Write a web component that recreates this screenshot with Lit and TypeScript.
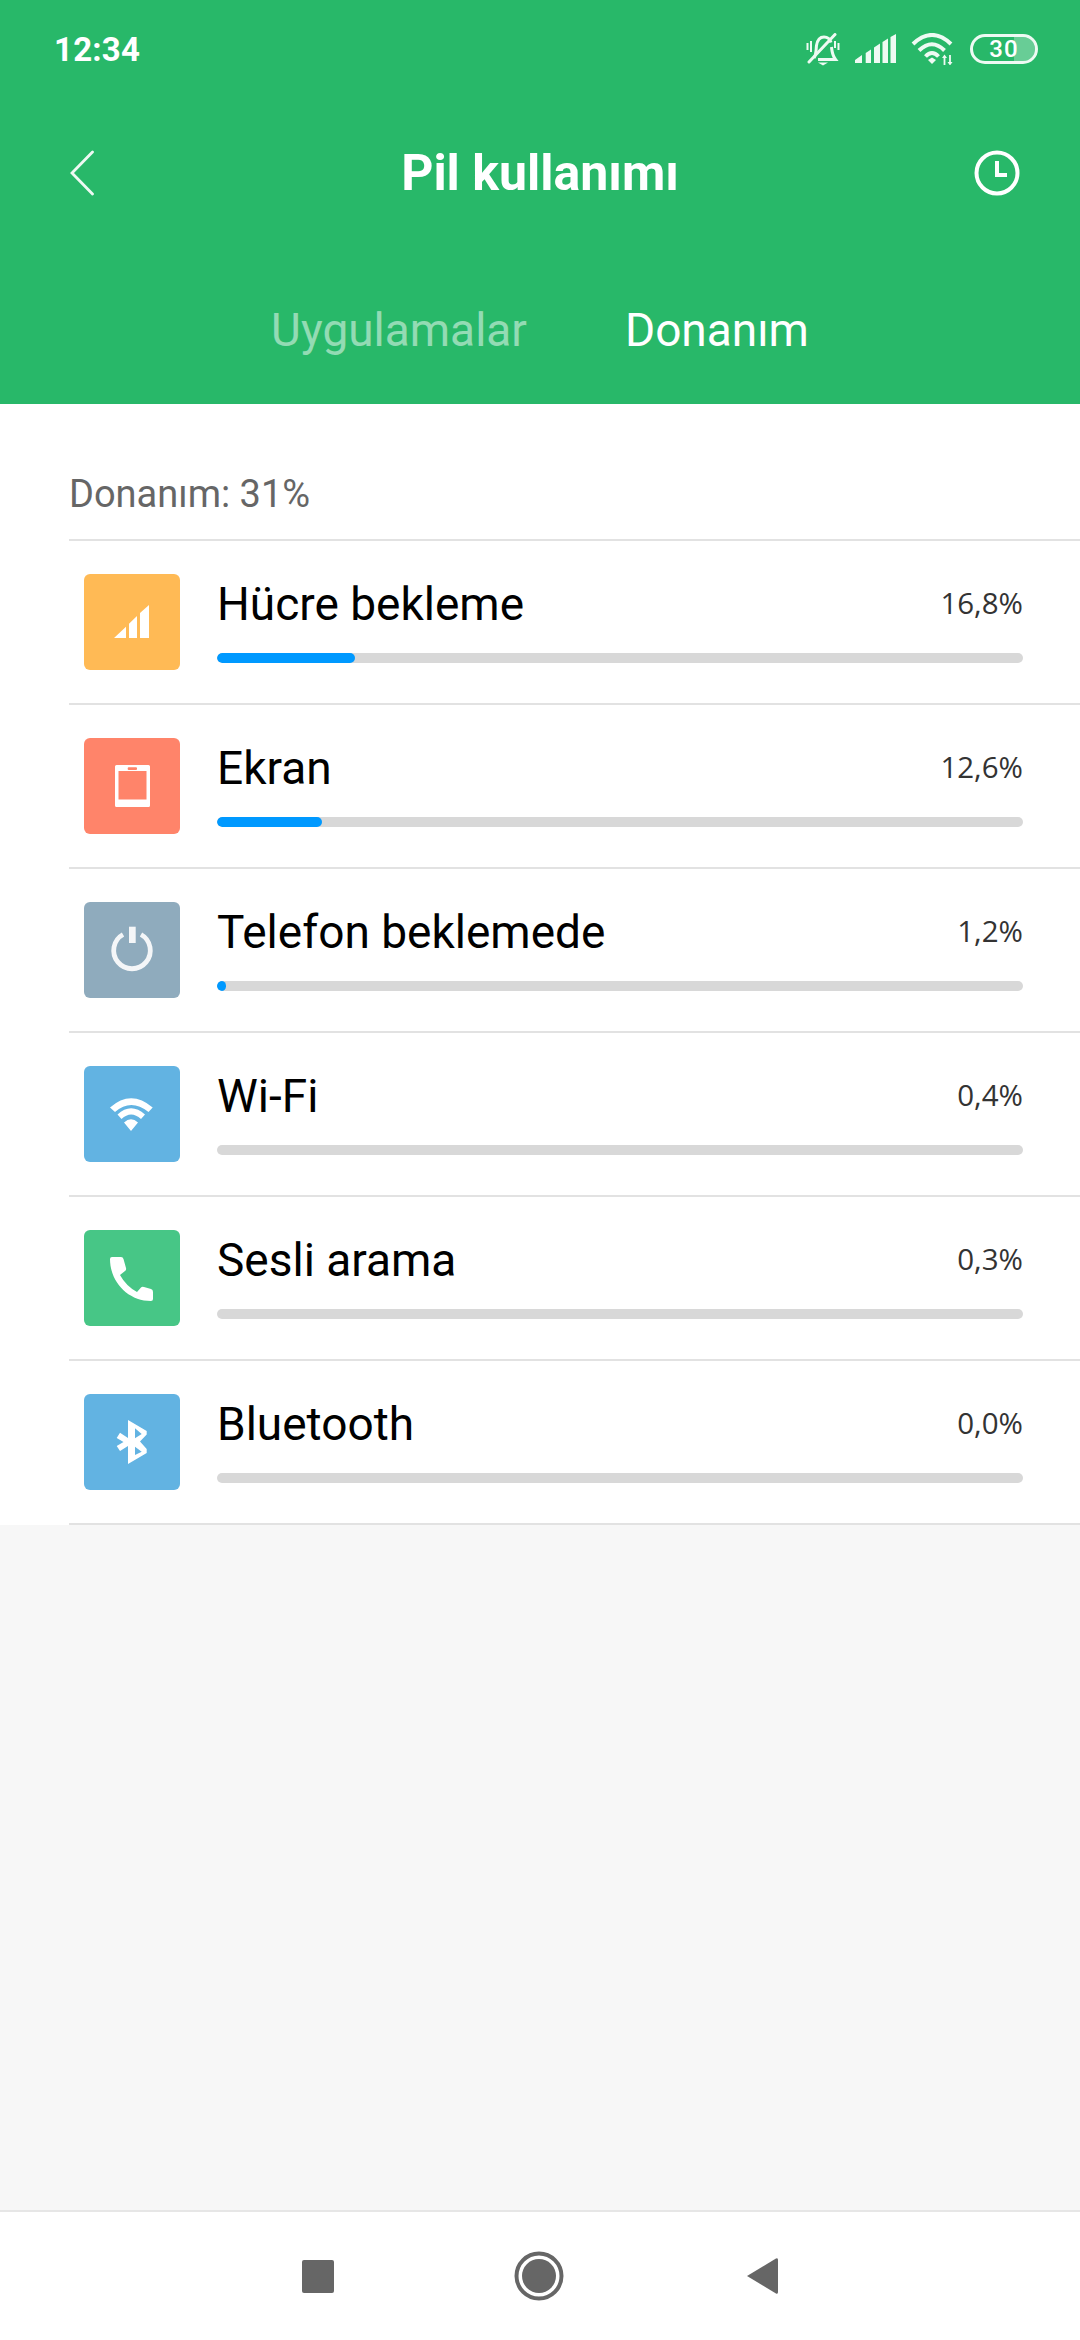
import { LitElement, html, css, svg } from "lit";
import { customElement } from "lit/decorators.js";

const rows = [
  { name: "Hücre bekleme", pct: "16,8%", w: 138, color: "#ffba55", icon: svg`<path d="M30 64L42 52.7V64ZM45 64V49.7L53 42V64ZM56 64V39L65 31V64Z" fill="#fff"/>` },
  { name: "Ekran", pct: "12,6%", w: 105, color: "#ff846a", icon: svg`<path fill-rule="evenodd" d="M32.5 27H64.5Q66 27 66 28.5V67.5Q66 69 64.500 69H32.500Q31 69 31 67.500V28.500Q31 27 32.500 27ZM34.500 33V61.500H62.500V33Z" fill="#fff"/><rect x="43.700" y="29.300" width="9.300" height="2.700" rx="1" fill="#ff846a"/>` },
  { name: "Telefon beklemede", pct: "1,2%", w: 9, color: "#8fabbd", icon: svg`<path d="M39 32.500A18.300 18.300 0 1 0 57 32.500" fill="none" stroke="#f4f6f8" stroke-width="4.800"/><rect x="45" y="24.700" width="6.700" height="16.300" fill="#f4f6f8"/>` },
  { name: "Wi-Fi", pct: "0,4%", w: 0, color: "#62b3e2", icon: svg`<path d="M26 41.500Q47 23 68.700 41.500L64.500 46Q47 32 31 46ZM33.500 48.500Q47 36 61 48.500L57 53Q47 44 37.500 53ZM40 56.500Q47 50 54 56.500L47 65Z" fill="#fff"/>` },
  { name: "Sesli arama", pct: "0,3%", w: 0, color: "#47c686", icon: svg`<path d="M28 27H37Q39 27 39.500 29L42 38Q42.500 40 41 41L36 45Q42 56 53 62L57 57.500Q58 56.500 60 57L67 59Q69 59.500 69 62V69Q69 71 67 71C44 71 26 52 26 29Q26 27 28 27Z" fill="#fff"/>` },
  { name: "Bluetooth", pct: "0,0%", w: 0, color: "#62b3e2", icon: svg`<path d="M44 26L62.700 37V40.500L56 47.500L62.700 55V59L44 70V52L36 57L32.700 52L39.500 48L32.700 44L36 38.700L44 44ZM51 34.300V44.300L57.700 40ZM51 52.700V61L57.700 57.700Z" fill="#fff" fill-rule="evenodd"/>` },
];

@customElement("app-root")
export class AppRoot extends LitElement {
  static styles = css`
    :host { display: flex; flex-direction: column; width: 1080px; height: 2340px; background: #f7f7f7; font-family: Roboto, sans-serif; color: #000; }
    .head { height: 404px; background: #28b869; color: #fff; box-sizing: border-box; display: flex; flex-direction: column; flex: none; }
    .status { height: 98px; box-sizing: border-box; display: flex; align-items: center; padding: 0 42px 0 54px; }
    .time { font-size: 33px; font-weight: 700; flex: 1; letter-spacing: .2px; }
    .sicons { display: flex; align-items: center; }
    .bell { margin-right: 15px; }
    .sig { margin-right: 15px; }
    .wifi { margin-right: 16px; }
    .bat { position: relative; width: 68px; height: 30px; box-sizing: border-box; border: 3px solid #eefaf3; border-radius: 15px; display: flex; align-items: center; justify-content: center; font-size: 24px; font-weight: 500; overflow: hidden; }
    .bat i { position: absolute; right: 0; top: 0; bottom: 0; width: 21px; background: rgba(255,255,255,.3); }
    .bat span { position: relative; letter-spacing: 1px; margin-right: 0; }
    .bar { height: 78px; display: flex; align-items: center; justify-content: space-between; padding: 0 60px 0 70px; margin-top: 36px; position: relative; }
    .title { position: absolute; left: 0; right: 0; text-align: center; font-size: 50px; font-weight: 700; }
    .tabs { display: flex; justify-content: center; gap: 98px; font-size: 46px; margin-top: 91px; }
    .tabs .off { color: rgba(255,255,255,.5); }
    .white { background: #fff; flex: none; }
    .label { height: 135px; box-sizing: border-box; padding: 68px 0 0 69px; font-size: 38px; line-height: 44px; color: #666; }
    .list { margin-left: 69px; border-top: 2px solid #e2e2e2; }
    .row { height: 164px; box-sizing: border-box; border-bottom: 2px solid #e2e2e2; display: flex; align-items: center; padding: 0 57px 0 15px; }
    .ic { width: 96px; height: 96px; border-radius: 6px; flex: none; display: block; }
    .body { flex: 1; margin-left: 37px; display: flex; flex-direction: column; }
    .line { display: flex; justify-content: space-between; align-items: flex-start; height: 64px; }
    .name { font-size: 46px; line-height: 47px; }
    .pct { font-family: "Open Sans", sans-serif; font-size: 29.5px; line-height: 43px; color: #333; }
    .track { height: 10px; border-radius: 5px; background: #d8d8d8; margin-top: 8px; overflow: hidden; }
    .fill { height: 10px; border-radius: 5px; background: #0099ff; }
    .space { flex: 1; }
    .nav { height: 130px; flex: none; background: #fff; border-top: 2px solid #e6e6e6; display: flex; align-items: center; justify-content: center; box-sizing: border-box; }
    .sq { width: 32px; height: 33px; background: #666; border-radius: 2px; }
    .home { margin: 0 182px 0 180px; display: block; }
    .tri { display: block; }
  `;

  render() {
    return html`
      <div class="head">
        <div class="status">
          <div class="time">12:34</div>
          <div class="sicons">
            <svg class="bell" width="34" height="33" viewBox="0 0 34 33" fill="none" stroke="#eefaf3">
              <path d="M8 25C10.500 21 10 16 10.500 12.500C11.300 7.500 14 4 18 4C21.500 4 24 6 25 9.500M25.500 14C26 18 26 22 29.500 26.500H12" stroke-width="3"/>
              <path d="M3 29L29 1.500" stroke-width="3" stroke-linecap="round"/>
              <path d="M1.500 10V17M5 8V19M29 8V15M32.500 10V17" stroke-width="2"/>
              <path d="M12 29.500H22L17 32.500Z" fill="#eefaf3" stroke="none"/>
            </svg>
            <svg class="sig" width="41" height="30" viewBox="0 0 41 30" fill="#eefaf3">
              <path d="M0 29V26L7 21V29ZM10.700 29V19L16 15.500V29ZM19 29V13.500L25 9.500V29ZM27.500 29V8L33 4.500V29ZM35.500 29V3L41 0V29Z"/>
            </svg>
            <svg class="wifi" width="43" height="32" viewBox="0 0 43 32" fill="none" stroke="#eefaf3" stroke-width="4">
              <path d="M2 11Q21 -7 40 11M8 17.500Q21 5 33.500 17.500M14.500 23.500Q21 16.500 27.500 23.500"/>
              <path d="M17 27L21 24.500L25 27L21 31Z" fill="#eefaf3" stroke="none"/>
              <path d="M33.500 24V32M39 22V30" stroke-width="1.800"/>
              <path d="M31 25L33.500 21.500L36 25ZM36.500 29L39 32.500L41.500 29Z" fill="#eefaf3" stroke="none"/>
            </svg>
            <div class="bat"><i></i><span>30</span></div>
          </div>
        </div>
        <div class="bar">
          <svg width="24" height="46" viewBox="0 0 24 46" fill="none" stroke="#eef9f3" stroke-width="2.800" stroke-linecap="round"><path d="M22.500 2L2 23L22.500 44"/></svg>
          <div class="title">Pil kullanımı</div>
          <svg width="46" height="46" viewBox="0 0 46 46" fill="none" stroke="#fff" stroke-width="4"><circle cx="23" cy="23" r="20.500"/><path d="M23 11V25H33"/></svg>
        </div>
        <div class="tabs"><span class="off">Uygulamalar</span><span>Donanım</span></div>
      </div>
      <div class="white">
        <div class="label">Donanım: 31%</div>
        <div class="list">
          ${rows.map((r) => html`
            <div class="row">
              <svg class="ic" viewBox="0 0 96 96" style="background:${r.color}">${r.icon}</svg>
              <div class="body">
                <div class="line"><span class="name">${r.name}</span><span class="pct">${r.pct}</span></div>
                <div class="track">${r.w ? html`<div class="fill" style="width:${r.w}px"></div>` : ""}</div>
              </div>
            </div>`)}
        </div>
      </div>
      <div class="space"></div>
      <div class="nav">
        <div class="sq"></div>
        <svg class="home" width="50" height="50" viewBox="0 0 50 50"><circle cx="25" cy="25" r="22.500" fill="none" stroke="#666" stroke-width="4"/><circle cx="25" cy="25" r="17" fill="#666"/></svg>
        <svg class="tri" width="32" height="38" viewBox="0 0 32 38"><path d="M1 19L30 1.500Q32 0.500 32 3V35Q32 37.500 30 36.500Z" fill="#666"/></svg>
      </div>
    `;
  }
}
